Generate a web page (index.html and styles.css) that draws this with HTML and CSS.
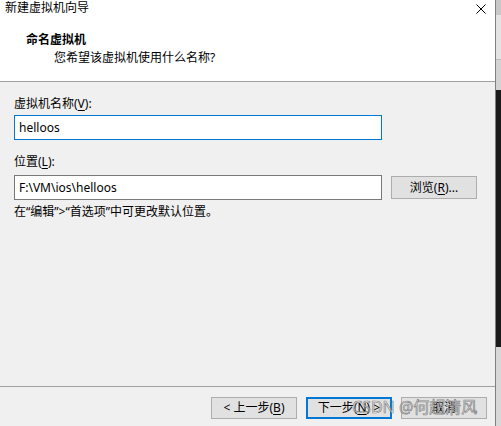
FILE: index.html
```html
<!DOCTYPE html>
<html>
<head>
<meta charset="utf-8">
<link rel="stylesheet" href="styles.css">
</head>
<body>
<div class="screen">
  <div class="window">
    <div class="header">
      <div class="titlebar">
        <span class="title">新建虚拟机向导</span>
        <svg class="close" width="10" height="10" viewBox="0 0 10 10"><path d="M0.5 0.5 L9.5 9.5 M9.5 0.5 L0.5 9.5" stroke="#000" stroke-width="1" fill="none"/></svg>
      </div>
      <div class="h-title">命名虚拟机</div>
      <div class="h-sub">您希望该虚拟机使用什么名称?</div>
    </div>
    <div class="content">
      <div class="label l1">虚拟机名称(<u>V</u>):</div>
      <div class="input focused">helloos</div>
      <div class="label l2">位置(<u>L</u>):</div>
      <div class="row">
        <div class="input">F:\VM\ios\helloos</div>
        <div class="btn browse">浏览(<u>R</u>)...</div>
      </div>
      <div class="hint">在“编辑”&gt;“首选项”中可更改默认位置。</div>
    </div>
    <div class="footer">
      <div class="btn">&lt; 上一步(<u>B</u>)</div>
      <div class="btn primary">下一步(<u>N</u>) &gt;</div>
      <div class="btn">取消</div>
      <div class="watermark">CSDN @何超清风</div>
    </div>
  </div>
  <div class="strip">
    <div class="s1"></div>
    <div class="s2"></div>
    <div class="s3"></div>
    <div class="s4"></div>
    <div class="s5"></div>
  </div>
</div>
</body>
</html>
```
FILE: styles.css
```css
* { box-sizing: border-box; }
html, body { margin: 0; padding: 0; }
body {
  width: 501px;
  height: 426px;
  overflow: hidden;
  font-family: "Noto Sans", "Noto Sans CJK SC", sans-serif;
  font-size: 12px;
  line-height: 16px;
  color: #000;
}
.screen { display: flex; width: 501px; height: 426px; }
.window {
  width: 496px;
  height: 426px;
  background: #f0f0f0;
  border-right: 1px solid #7f7f7f;
  display: flex;
  flex-direction: column;
  position: relative;
}
.header {
  background: #fff;
  height: 82px;
  border-bottom: 1px solid #a0a0a0;
}
.titlebar {
  height: 20px;
  display: flex;
  justify-content: space-between;
  align-items: flex-start;
  padding: 0 9px 0 5px;
}
.title { line-height: 16px; }
.close { margin-top: 4px; }
.h-title {
  font-weight: bold;
  margin-top: 12px;
  padding-left: 26px;
}
.h-sub {
  margin-top: 2px;
  padding-left: 54px;
}
.content {
  padding: 0 0 0 14px;
  flex: 1;
}
.label.l1 { margin-top: 14px; }
.label.l2 { margin-top: 14px; }
u { text-decoration: underline; text-underline-offset: 2px; }
.input {
  width: 368px;
  height: 25px;
  background: #fff;
  border: 1px solid #7a7a7a;
  padding: 0 4px;
  line-height: 23px;
  margin-top: 3px;
}
.input.focused { border-color: #0078d7; }
.row { display: flex; align-items: flex-start; gap: 9px; margin-top: 5px; }
.row .input { margin-top: 0; }
.btn {
  height: 22px;
  width: 86px;
  background: #e1e1e1;
  border: 1px solid #adadad;
  display: flex;
  align-items: center;
  justify-content: center;
  line-height: 16px;
}
.browse { margin-top: 1px; height: 23px; }
.hint { margin-top: 4px; }
.footer {
  height: 40px;
  border-top: 1px solid #a0a0a0;
  display: flex;
  align-items: flex-start;
  gap: 9px;
  padding: 10px 0 0 211px;
  position: relative;
}
.btn.primary { border: 2px solid #0078d7; }
.watermark {
  position: absolute;
  left: 352px;
  top: 10px;
  font-size: 16px;
  line-height: 20px;
  color: rgba(245, 245, 245, 0.6);
  -webkit-text-stroke: 0.7px rgba(100, 100, 100, 0.75);
  white-space: nowrap;
}
.strip { width: 5px; display: flex; flex-direction: column; }
.s1 { height: 15px; background: #c8c8c8; }
.s2 { height: 45px; background: #e4e4e4; border-bottom: 1px solid #bdbdbd; }
.s3 { height: 30px; background: #d3d3d3; }
.s4 { height: 257px; background: #1b1b1b; }
.s5 { flex: 1; background: #d8d8d8; }
```
